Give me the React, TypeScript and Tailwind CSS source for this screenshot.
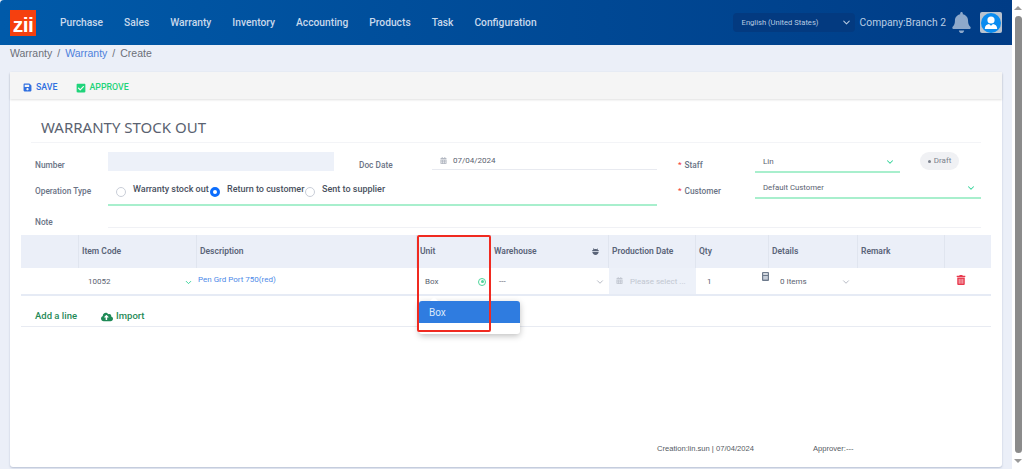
import { ChevronDown } from 'lucide-react'
import {
  FaBell,
  FaCalendarAlt,
  FaCheckSquare,
  FaCloudUploadAlt,
  FaSave,
  FaTrashAlt,
} from 'react-icons/fa'

const navItems = ['Purchase', 'Sales', 'Warranty', 'Inventory', 'Accounting', 'Products', 'Task', 'Configuration']

const headCell = 'flex items-center border-r border-[#e0e5ef] pl-[3px] text-[8.5px] font-semibold text-[#5a6478]'

function Label({ text, required }: { text: string; required?: boolean }) {
  return (
    <span className="flex items-center text-[8.3px] font-medium text-[#6a7385]">
      {required && <span className="mr-[3px] text-[8px] leading-none text-[#f5413d]">*</span>}
      {text}
    </span>
  )
}

function Radio({ label, checked, className }: { label: string; checked?: boolean; className: string }) {
  return (
    <div className={`flex items-start ${className}`}>
      <span
        className={
          checked
            ? 'mt-[8px] h-[10px] w-[10px] shrink-0 rounded-full border-[3px] border-[#0d6efd] bg-white'
            : 'mt-[8px] h-[10px] w-[10px] shrink-0 rounded-full border border-[#c9ced8] bg-white'
        }
      />
      <span className="mt-[4px] ml-[7px] text-[9px] font-medium leading-[12px] whitespace-nowrap text-[#4a5160]">{label}</span>
    </div>
  )
}

export default function App() {
  return (
    <div className="flex h-[469px] w-[1024px] overflow-hidden bg-white font-['Roboto',sans-serif]">
      <div className="flex w-[1012px] flex-col bg-[#ebeff8]">
        {/* top bar */}
        <header className="flex h-[45px] shrink-0 items-center rounded-tl-[4px] bg-gradient-to-r from-[#005aa9] to-[#003c86] pl-[10px]">
          <div className="flex h-[26px] w-[26px] items-end justify-center bg-[#f5400f] pb-[1px] font-['Liberation_Sans',sans-serif] text-[21px] leading-[20px] font-bold tracking-[-0.5px] text-white">
            zii
          </div>
          <nav className="ml-[24px] flex gap-[21px]">
            {navItems.map((item) => (
              <span key={item} className="text-[10.25px] font-medium whitespace-nowrap text-[#c9d9ec]">
                {item}
              </span>
            ))}
          </nav>
          <div className="ml-auto flex h-[19px] w-[122px] items-center justify-between rounded-[4px] bg-[#033a80] pr-[3px] pl-[9px]">
            <span className="text-[7.6px] whitespace-nowrap text-[#b8cbe2]">English (United States)</span>
            <ChevronDown size={11} strokeWidth={2.2} className="text-[#b8cbe2]" />
          </div>
          <span className="ml-[5px] text-[10.3px] whitespace-nowrap text-[#b9cde4]">Company:Branch 2</span>
          <FaBell size={21} className="ml-[5px] text-[#8ea9cb]" />
          <div className="mr-[10px] ml-[8px] flex h-[21px] w-[22px] items-center justify-center rounded-[2px] bg-[#b9c3cf]">
            <span className="flex h-[20px] w-[20px] items-center justify-center rounded-full bg-[#0a8cf0]">
              <svg viewBox="0 0 20 20" className="h-[20px] w-[20px]" fill="white">
                <circle cx="10" cy="7" r="3.6" />
                <path d="M3.8 16c0-3.2 2.2-4.6 4.2-4.9l2 1.7 2-1.7c2 .3 4.2 1.7 4.2 4.9z" />
              </svg>
            </span>
          </div>
        </header>

        {/* breadcrumb */}
        <div className="flex h-[27px] shrink-0 items-start gap-[5px] pl-[10px] font-['Liberation_Sans',sans-serif] text-[10.5px] leading-[16px] text-[#6b6f78]">
          <span>Warranty</span>
          <span>/</span>
          <span className="text-[#4d7fdc]">Warranty</span>
          <span>/</span>
          <span>Create</span>
        </div>

        {/* card */}
        <main className="mr-[10px] mb-[2px] ml-[10px] flex min-h-0 flex-1 flex-col rounded-[3px] bg-white shadow-[0_1px_2px_rgba(90,105,140,0.35)]">
          <div className="flex h-[27px] shrink-0 items-center gap-[19px] bg-[#f5f5f5] pt-[4px] pl-[13px] text-[8.8px] font-medium shadow-[0_1px_2px_rgba(0,0,0,0.12)]">
            <span className="flex items-center gap-[4px] text-[#2f6fe0]">
              <FaSave size={9} />
              SAVE
            </span>
            <span className="flex items-center gap-[3px] text-[#1fd47a]">
              <FaCheckSquare size={10} />
              APPROVE
            </span>
          </div>

          <h1 className="mt-[19px] ml-[31px] font-['Noto_Sans',sans-serif] text-[15px] leading-[19px] text-[#5a6270]">WARRANTY STOCK OUT</h1>
          <div className="mt-[5px] mr-[21px] ml-[21px] h-px shrink-0 bg-[#f3f4f7]" />

          {/* form */}
          <div className="mt-[9px] flex flex-col pr-[21px] pl-[25px]">
            <div className="flex h-[20px]">
              <div className="flex w-[73px] items-end pb-px">
                <Label text="Number" />
              </div>
              <div className="h-[19px] w-[226px] bg-[#edf1f9]" />
              <div className="ml-[25px] flex w-[73px] items-end pb-px">
                <Label text="Doc Date" />
              </div>
              <div className="flex h-[18px] w-[225px] items-center gap-[6px] border-b border-[#e8eaf0] pl-[8px] text-[8px] text-[#5a6270]">
                <FaCalendarAlt size={7} className="text-[#b3b8c2]" />
                07/04/2024
              </div>
              <div className="ml-[21px] flex w-[77px] items-end pb-px">
                <Label text="Staff" required />
              </div>
              <div className="flex h-[21px] w-[145px] items-center justify-between border-b-2 border-[#a8efcd] pr-[5px] pl-[8px] text-[8px] text-[#5a6270]">
                Lin
                <ChevronDown size={10} strokeWidth={2.5} className="text-[#34d399]" />
              </div>
              <div className="ml-[20px] flex h-[18px] w-[39px] items-center justify-center gap-[3px] rounded-full bg-[#f0f1f4] text-[8px] text-[#7b818d]">
                <span className="h-[3px] w-[3px] rounded-full bg-[#7b818d]" />
                Draft
              </div>
            </div>

            <div className="mt-[7px] flex">
              <div className="flex h-[25px] w-[73px] items-center pb-[1px]">
                <Label text="Operation Type" />
              </div>
              <div className="flex h-[27px] w-[549px] border-b-2 border-[#a8efcd] pl-[8px]">
                <Radio label="Warranty stock out" className="w-[94px]" />
                <Radio label="Return to customer" checked className="w-[95px]" />
                <Radio label="Sent to supplier" className="w-[100px]" />
              </div>
              <div className="ml-[21px] flex h-[25px] w-[77px] items-center pb-[1px]">
                <Label text="Customer" required />
              </div>
              <div className="flex h-[20px] w-[226px] items-center justify-between border-b-2 border-[#a8efcd] pr-[5px] pl-[8px] text-[7.8px] text-[#5a6270]">
                Default Customer
                <ChevronDown size={10} strokeWidth={2.5} className="text-[#34d399]" />
              </div>
            </div>

            <div className="flex h-[22px]">
              <div className="flex w-[73px] items-center pt-[11px]">
                <Label text="Note" />
              </div>
              <div className="flex-1 border-b border-[#f0f1f5]" />
            </div>
          </div>

          {/* lines table */}
          <div className="mt-[7px] mr-[11px] ml-[11px] flex flex-col">
            <div className="grid h-[33px] grid-cols-[58px_118px_220px_74px_118px_87px_73px_89px_87px_46px] bg-[#ebeff8]">
              <div className={headCell} />
              <div className={headCell}>Item Code</div>
              <div className={headCell}>Description</div>
              <div className={headCell}>Unit</div>
              <div className={`${headCell} justify-between pr-[8px]`}>
                Warehouse
                <svg viewBox="0 0 10 10" className="h-[9px] w-[9px]" fill="#5a6478">
                  <path d="M2.5 1.2 4 2.4c.7-.3 1.5-.3 2.2 0L7.6 1.4 7.4 3c.7.3 1.4.8 1.6 1.5H1c.2-.7.8-1.2 1.5-1.5z" />
                  <path d="M1.4 5.2h7.2C8.4 7.4 6.9 8.8 5 8.8S1.6 7.4 1.4 5.2z" />
                </svg>
              </div>
              <div className={headCell}>Production Date</div>
              <div className={headCell}>Qty</div>
              <div className={headCell}>Details</div>
              <div className={headCell}>Remark</div>
              <div />
            </div>

            <div className="grid h-[28px] grid-cols-[58px_118px_220px_74px_118px_87px_73px_89px_87px_46px] border-b-2 border-[#e6ebf5] text-[8px] text-[#5a6270]">
              <div />
              <div className="flex items-center justify-between pt-[2px] pr-[4px] pl-[9px]">
                10052
                <ChevronDown size={9} strokeWidth={2.5} className="text-[#34d399]" />
              </div>
              <div className="flex items-center pb-[2px] pl-px text-[#4d8ae8]">Pen Grd Port 750(red)</div>
              <div className="flex items-center justify-between pt-px pr-[5px] pl-[8px]">
                Box
                <span className="flex h-[8px] w-[8px] items-center justify-center rounded-full border border-[#4fd69c]">
                  <span className="h-[3px] w-[3px] rounded-full bg-[#4fd69c]" />
                </span>
              </div>
              <div className="flex items-center justify-between pt-px pr-[4px] pl-[8px]">
                ---
                <ChevronDown size={10} className="text-[#a9afba]" />
              </div>
              <div className="flex items-center gap-[7px] bg-[#edf1f9] pt-px pl-[7px] text-[#c2c7d1]">
                <FaCalendarAlt size={7} className="mb-[3px]" />
                Please select ...
              </div>
              <div className="relative flex items-center pt-px pl-[11px]">
                1
                <svg viewBox="0 0 7 9" className="absolute top-[4px] right-0 h-[9px] w-[7px]">
                  <rect x="0" y="0" width="7" height="9" rx="1" fill="#6d7a8c" />
                  <rect x="1.2" y="1.2" width="4.6" height="1.6" fill="#eef1f6" />
                  <rect x="1.2" y="4" width="4.6" height="3.6" fill="#c7ced9" />
                </svg>
              </div>
              <div className="flex items-center justify-between pt-px pr-[7px] pl-[11px]">
                0 Items
                <ChevronDown size={10} className="text-[#a9afba]" />
              </div>
              <div />
              <div className="flex items-center justify-center pr-[14px] pb-[3px]">
                <FaTrashAlt size={10} className="text-[#e8394d]" />
              </div>
            </div>

            <div className="flex h-[31px] items-center border-b border-[#e8ebf2] pt-[11px] pl-[14px] text-[9.5px] font-medium text-[#1f8a57]">
              Add a line
              <FaCloudUploadAlt size={12} className="ml-[24px] text-[#1f8a57]" />
              <span className="ml-[3px]">Import</span>
            </div>
          </div>

          {/* audit info */}
          <div className="mt-auto flex pb-[12px] pl-[647px] font-['Liberation_Sans',sans-serif] text-[7.6px] leading-[12px] text-[#555a63]">
            <span className="w-[156px]">Creation:lin.sun | 07/04/2024</span>
            <span>Approver:---</span>
          </div>
        </main>
      </div>

      {/* scrollbar */}
      <div className="flex w-[12px] shrink-0 flex-col items-center justify-between bg-white pt-[6px] pb-[6px]">
        <span className="h-0 w-0 border-x-[4px] border-b-[4px] border-x-transparent border-b-[#9a9a9a]" />
        <span className="mt-[6px] mb-[6px] w-[7px] flex-1 rounded-full bg-[#8b8b8b]" />
        <span className="h-0 w-0 border-x-[4px] border-t-[4px] border-x-transparent border-t-[#9a9a9a]" />
      </div>

      {/* unit dropdown */}
      <div className="absolute top-[301px] left-[419px] w-[101px] rounded-[3px] bg-white pb-[11px] shadow-[0_2px_6px_rgba(0,0,0,0.25)]">
        <span className="absolute -top-[4px] left-[11px] h-0 w-0 border-x-[4px] border-b-[4px] border-x-transparent border-b-white" />
        <div className="flex h-[22px] items-center rounded-t-[3px] bg-[#2f7ce0] pl-[10px] text-[10px] text-[#dbe8fb]">Box</div>
      </div>

      {/* red annotation */}
      <div className="pointer-events-none absolute top-[235px] left-[417px] h-[97px] w-[74px] rounded-[2px] border-2 border-[#f02a20]" />
    </div>
  )
}
